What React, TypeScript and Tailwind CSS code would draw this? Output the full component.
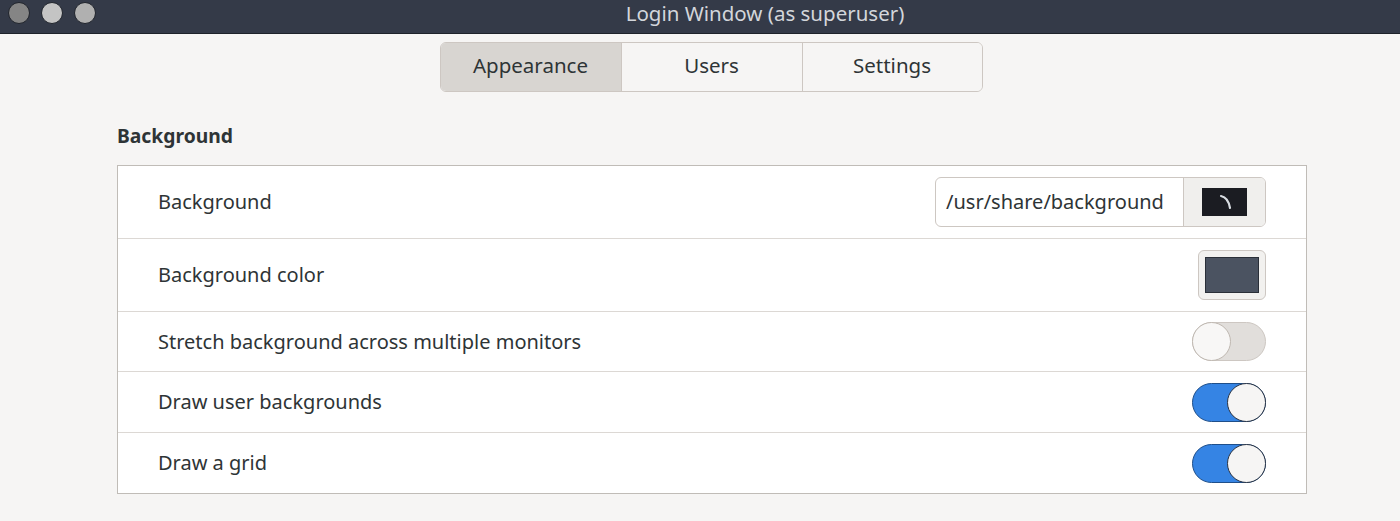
import React from "react";

const font = { fontFamily: '"Noto Sans", "Open Sans", sans-serif' };

function Switch({ on }: { on: boolean }) {
  return on ? (
    <div className="relative h-[39px] w-[74px] rounded-full border border-[#1f4f8a] bg-[#3584e4]">
      <div className="absolute right-[-1px] top-[-1px] h-[39px] w-[39px] rounded-full border border-[#2a3444] bg-[#f6f5f4]" />
    </div>
  ) : (
    <div className="relative h-[39px] w-[74px] rounded-full border border-[#cdc7c2] bg-[#e1dedb]">
      <div className="absolute left-[-1px] top-[-1px] h-[39px] w-[39px] rounded-full border border-[#bfb8b1] bg-[#f8f7f6]" />
    </div>
  );
}

function Row({ label, children, h }: { label: string; children: React.ReactNode; h: string }) {
  return (
    <div className={`flex items-center justify-between pl-[40px] pr-[40px] ${h}`}>
      <span className="text-[20px] text-[#2e3436]">{label}</span>
      {children}
    </div>
  );
}

export default function App() {
  return (
    <div className="h-[521px] w-[1400px] overflow-hidden bg-[#f6f5f4]" style={font}>
      <div className="relative flex h-[34px] items-start justify-center border-b border-[#1e222a] bg-[#343a48] pl-[130px]">
        <div className="absolute left-[8px] top-[2px] flex gap-[11px]">
          <div className="h-[22px] w-[22px] rounded-full border border-[#20242c] bg-[#858585]" />
          <div className="h-[22px] w-[22px] rounded-full border border-[#20242c] bg-[#c4c4c4]" />
          <div className="h-[22px] w-[22px] rounded-full border border-[#20242c] bg-[#b0b0b0]" />
        </div>
        <span className="text-[20.5px] leading-[26px] text-[#d3d6db]">Login Window (as superuser)</span>
      </div>

      <div className="mt-[8px] flex justify-center">
        <div className="ml-[22px] flex h-[50px] overflow-hidden rounded-[6px] border border-[#cdc7c2] text-[20.5px] text-[#2e3436]">
          <div className="flex w-[180px] items-center justify-center bg-[#d8d5d1] pb-[3px]">Appearance</div>
          <div className="flex w-[181px] items-center justify-center border-l border-[#cdc7c2] bg-[#f6f5f4] pb-[3px]">Users</div>
          <div className="flex w-[180px] items-center justify-center border-l border-[#cdc7c2] bg-[#f6f5f4] pb-[3px]">Settings</div>
        </div>
      </div>

      <div className="ml-[117px] mt-[31px] text-[19.3px] font-bold leading-[26px] text-[#2e3436]">Background</div>

      <div className="ml-[117px] mt-[16px] w-[1190px] border border-[#c0bcb7] bg-white">
        <Row label="Background" h="h-[72px]">
          <div className="flex h-[50px] overflow-hidden rounded-[6px] border border-[#cdc7c2]">
            <div className="flex w-[247px] items-center px-[10px] text-[20px] text-[#2e3436]">/usr/share/background</div>
            <div className="flex w-[82px] items-center justify-center border-l border-[#cdc7c2] bg-[#f0efed]">
              <svg width="45" height="28" viewBox="0 0 45 28">
                <rect width="45" height="28" fill="#1b1c22" />
                <path d="M19 8 C24 9 27 14 28 20" stroke="#d8dce2" strokeWidth="2.2" fill="none" strokeLinecap="round" />
              </svg>
            </div>
          </div>
        </Row>
        <div className="h-px bg-[#dcd8d4]" />
        <Row label="Background color" h="h-[72px]">
          <div className="flex h-[50px] w-[68px] items-center justify-center rounded-[6px] border border-[#cdc7c2] bg-[#f2f1ef]">
            <div className="h-[36px] w-[54px] border border-[#2a2f38] bg-[#4b5361]" />
          </div>
        </Row>
        <div className="h-px bg-[#dcd8d4]" />
        <Row label="Stretch background across multiple monitors" h="h-[59px]">
          <Switch on={false} />
        </Row>
        <div className="h-px bg-[#dcd8d4]" />
        <Row label="Draw user backgrounds" h="h-[60px]">
          <Switch on={true} />
        </Row>
        <div className="h-px bg-[#dcd8d4]" />
        <Row label="Draw a grid" h="h-[60px]">
          <Switch on={true} />
        </Row>
      </div>
    </div>
  );
}
